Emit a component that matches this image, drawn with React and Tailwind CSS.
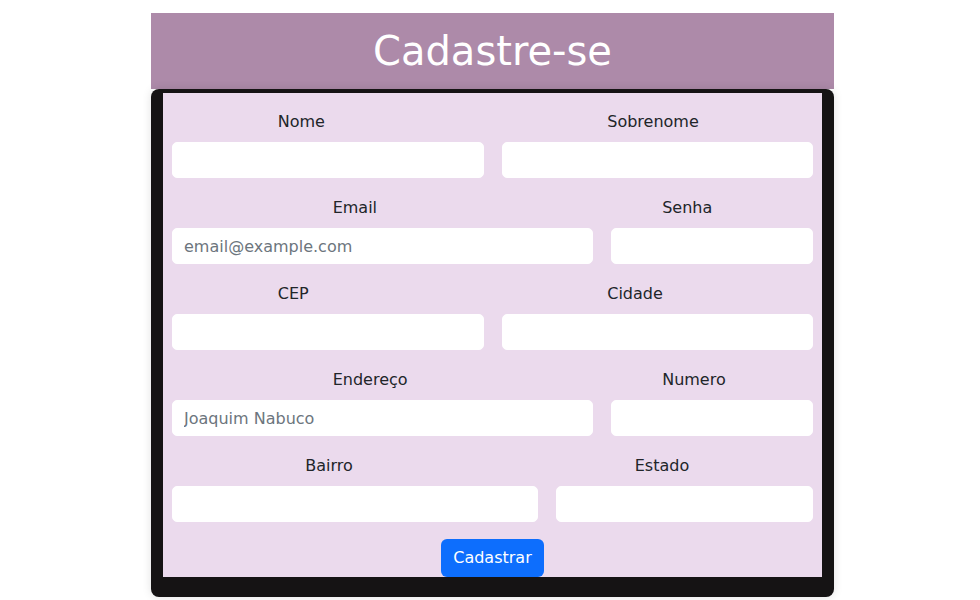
import React from 'react';

const rows = [
  [
    { label: 'Nome', span: 'col-span-6' },
    { label: 'Sobrenome', span: 'col-span-6' },
  ],
  [
    { label: 'Email', span: 'col-span-8', placeholder: 'email@example.com' },
    { label: 'Senha', span: 'col-span-4', type: 'password' },
  ],
  [
    { label: 'CEP', span: 'col-span-6' },
    { label: 'Cidade', span: 'col-span-6' },
  ],
  [
    { label: 'Endereço', span: 'col-span-8', placeholder: 'Joaquim Nabuco' },
    { label: 'Numero', span: 'col-span-4' },
  ],
  [
    { label: 'Bairro', span: 'col-span-7' },
    { label: 'Estado', span: 'col-span-5' },
  ],
];

const Field = ({ label, span, placeholder, type }) => (
  <div className={span}>
    <label className="block w-[100px] mx-auto text-left leading-6 mb-[8px] text-[#212529]">{label}</label>
    <input
      type={type || 'text'}
      placeholder={placeholder}
      className="block w-full h-9 rounded-[5px] bg-white border border-white px-[11px] text-base text-[#212529] placeholder:text-[#6c757d] outline-none"
    />
  </div>
);

const App = () => {
  return (
    <div className="min-h-screen bg-white pt-[13px] font-['DejaVu_Sans',sans-serif]">
      <div className="ml-[151px] w-[683px]">
        <div className="h-[76px] bg-[#ad8aa9] flex items-center justify-center">
          <h1 className="text-[40px] text-white leading-none">Cadastre-se</h1>
        </div>
        <div className="rounded-lg bg-[#151314] pt-[4px] px-[12px] pb-[20px] shadow-[0_0_10px_rgba(0,0,0,0.12)]">
          <form className="bg-[#ebdaed] px-[9px] pt-[17px]" onSubmit={(e) => e.preventDefault()}>
            <div className="flex flex-col gap-[18px]">
              {rows.map((row, i) => (
                <div key={i} className="grid grid-cols-12 gap-x-[18px]">
                  {row.map((f) => (
                    <Field key={f.label} {...f} />
                  ))}
                </div>
              ))}
              <div className="flex justify-center -mt-px">
                <button
                  type="submit"
                  className="h-[38px] px-3 rounded-md bg-[#0d6efd] text-white text-base"
                >
                  Cadastrar
                </button>
              </div>
            </div>
          </form>
        </div>
      </div>
    </div>
  );
};

export default App;
